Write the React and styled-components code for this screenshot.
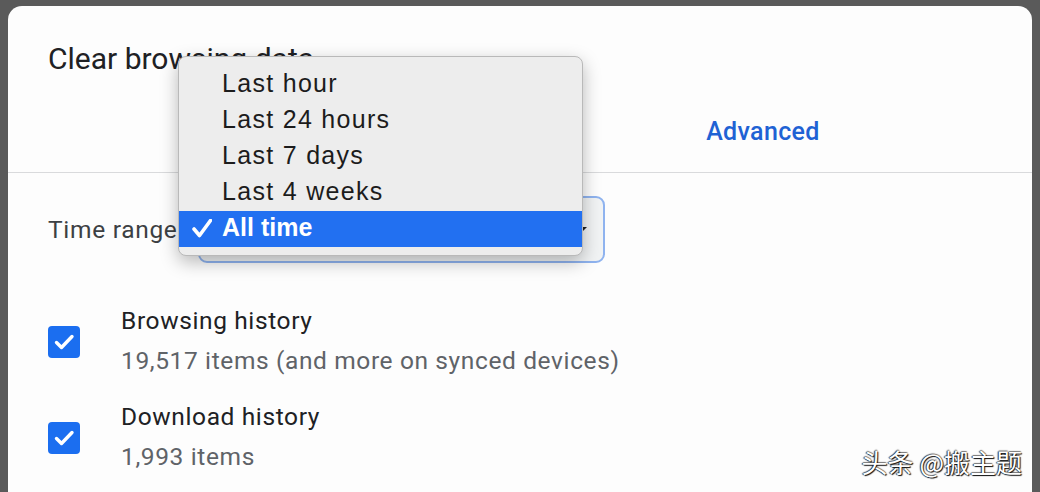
import React from 'react';
import styled, { createGlobalStyle } from 'styled-components';

const GlobalStyle = createGlobalStyle`
  * { box-sizing: border-box; }
  html, body {
    margin: 0;
    height: 100%;
    overflow: hidden;
    background: #5a5a5a;
  }
  body {
    font-family: Roboto, "Liberation Sans", sans-serif;
  }
`;

const timeRanges = ['Last hour', 'Last 24 hours', 'Last 7 days', 'Last 4 weeks', 'All time'];

const dataTypes = [
  { title: 'Browsing history', detail: '19,517 items (and more on synced devices)' },
  { title: 'Download history', detail: '1,993 items' },
];

function CheckIcon() {
  return (
    <svg width="32" height="32" viewBox="0 0 32 32">
      <path d="M8.5 16.5 L13.5 21.5 L24 10.5" fill="none" stroke="#fff" strokeWidth="3.4" strokeLinecap="round" strokeLinejoin="round" />
    </svg>
  );
}

function MenuTick() {
  return (
    <svg width="20" height="19" viewBox="0 0 20 19">
      <path d="M2 10 L7.5 16.5 L18.5 1.5" fill="none" stroke="#fff" strokeWidth="3.6" strokeLinecap="round" strokeLinejoin="round" />
    </svg>
  );
}

function App() {
  return (
    <>
      <GlobalStyle />
      <Backdrop>
        <Dialog>
          <Title>Clear browsing data</Title>
          <Tabs>
            <Tab>Basic</Tab>
            <Tab $active>Advanced</Tab>
          </Tabs>

          <Body>
            <TimeRow>
              <Label>Time range</Label>
              <Select>
                <SelectValue>All time</SelectValue>
                <Arrow />
              </Select>
            </TimeRow>

            {dataTypes.map(item => (
              <OptionRow key={item.title}>
                <Checkbox><CheckIcon /></Checkbox>
                <OptionText>
                  <OptionTitle>{item.title}</OptionTitle>
                  <OptionDetail>{item.detail}</OptionDetail>
                </OptionText>
              </OptionRow>
            ))}
          </Body>

          {/* native select popup opened over the dialog */}
          <Menu>
            {timeRanges.map(range => {
              const selected = range === 'All time';
              return (
                <MenuItem key={range} $selected={selected}>
                  {selected && <Tick><MenuTick /></Tick>}
                  {range}
                </MenuItem>
              );
            })}
          </Menu>

          <Watermark>头条 @搬主题</Watermark>
        </Dialog>
      </Backdrop>
    </>
  );
}

const Backdrop = styled.div`
  height: 100vh;
  padding: 6px 8px 0;
`;

const Dialog = styled.section`
  position: relative;
  height: 100%;
  background: #fdfdfd;
  border-radius: 14px 14px 0 0;
`;

const Title = styled.h1`
  margin: 0;
  padding: 35px 40px 0;
  font-size: 30px;
  line-height: 36px;
  font-weight: 400;
  color: #202124;
`;

const Tabs = styled.nav`
  display: flex;
  height: 96px;
  padding: 0 26px;
  border-bottom: 1px solid #d9dadc;
`;

const Tab = styled.div`
  flex: 1;
  text-align: center;
  padding-top: 40px;
  font-size: 25px;
  line-height: 30px;
  font-weight: 500;
  letter-spacing: 0.35px;
  color: ${p => (p.$active ? '#1f62d4' : '#5f6368')};
`;

const Body = styled.div`
  padding: 23px 40px 0;
`;

const TimeRow = styled.div`
  display: flex;
  align-items: center;
`;

const Label = styled.span`
  width: 150px;
  font-size: 24.5px;
  letter-spacing: 0.7px;
  color: #3c4043;
`;

const Select = styled.div`
  display: flex;
  align-items: center;
  justify-content: space-between;
  width: 407px;
  height: 67px;
  padding: 0 16px 0 20px;
  border: 2px solid #8fb3ef;
  border-radius: 9px;
  background: #f1f3f4;
  font-size: 24.5px;
  color: #202124;
`;

const SelectValue = styled.span``;

const Arrow = styled.span`
  width: 0;
  height: 0;
  border-left: 5px solid transparent;
  border-right: 5px solid transparent;
  border-top: 5px solid #202124;
`;

const OptionRow = styled.div`
  display: flex;
  align-items: center;
  gap: 41px;
  margin-top: 38px;

  & + & {
    margin-top: 16px;
  }
`;

const Checkbox = styled.span`
  display: flex;
  width: 32px;
  height: 32px;
  margin-top: 1px;
  border-radius: 4px;
  background: #1b6ef0;
`;

const OptionText = styled.div`
  font-size: 24.5px;
  line-height: 40px;
  letter-spacing: 0.62px;
`;

const OptionTitle = styled.div`
  color: #202124;
`;

const OptionDetail = styled.div`
  color: #5f6368;
`;

const Menu = styled.ul`
  position: absolute;
  left: 170px;
  top: 50px;
  width: 405px;
  margin: 0;
  padding: 10px 0 8px;
  list-style: none;
  background: #ededed;
  border: 1px solid #b9b9b9;
  border-radius: 8px;
  box-shadow: 0 6px 18px rgba(0, 0, 0, 0.28);
  font-family: "Liberation Sans", Arial, sans-serif;
`;

const MenuItem = styled.li`
  position: relative;
  height: 36px;
  padding-left: 43px;
  font-size: 25px;
  line-height: 33px;
  letter-spacing: ${p => (p.$selected ? '0' : '1.3px')};
  color: ${p => (p.$selected ? '#fff' : '#1c1c1c')};
  background: ${p => (p.$selected ? '#2270f1' : 'transparent')};
  font-weight: ${p => (p.$selected ? 700 : 400)};
`;

const Tick = styled.span`
  position: absolute;
  left: 13px;
  top: 8px;
  display: flex;
`;

const Watermark = styled.div`
  position: absolute;
  right: 10px;
  bottom: 15px;
  font-family: "Noto Sans CJK SC", sans-serif;
  font-size: 26px;
  line-height: 30px;
  color: #fff;
  text-shadow: 1px 1px 1px rgba(0, 0, 0, 0.95), -1px 0 1px rgba(0, 0, 0, 0.8), 0 -1px 1px rgba(0, 0, 0, 0.5);
`;

export default App;
